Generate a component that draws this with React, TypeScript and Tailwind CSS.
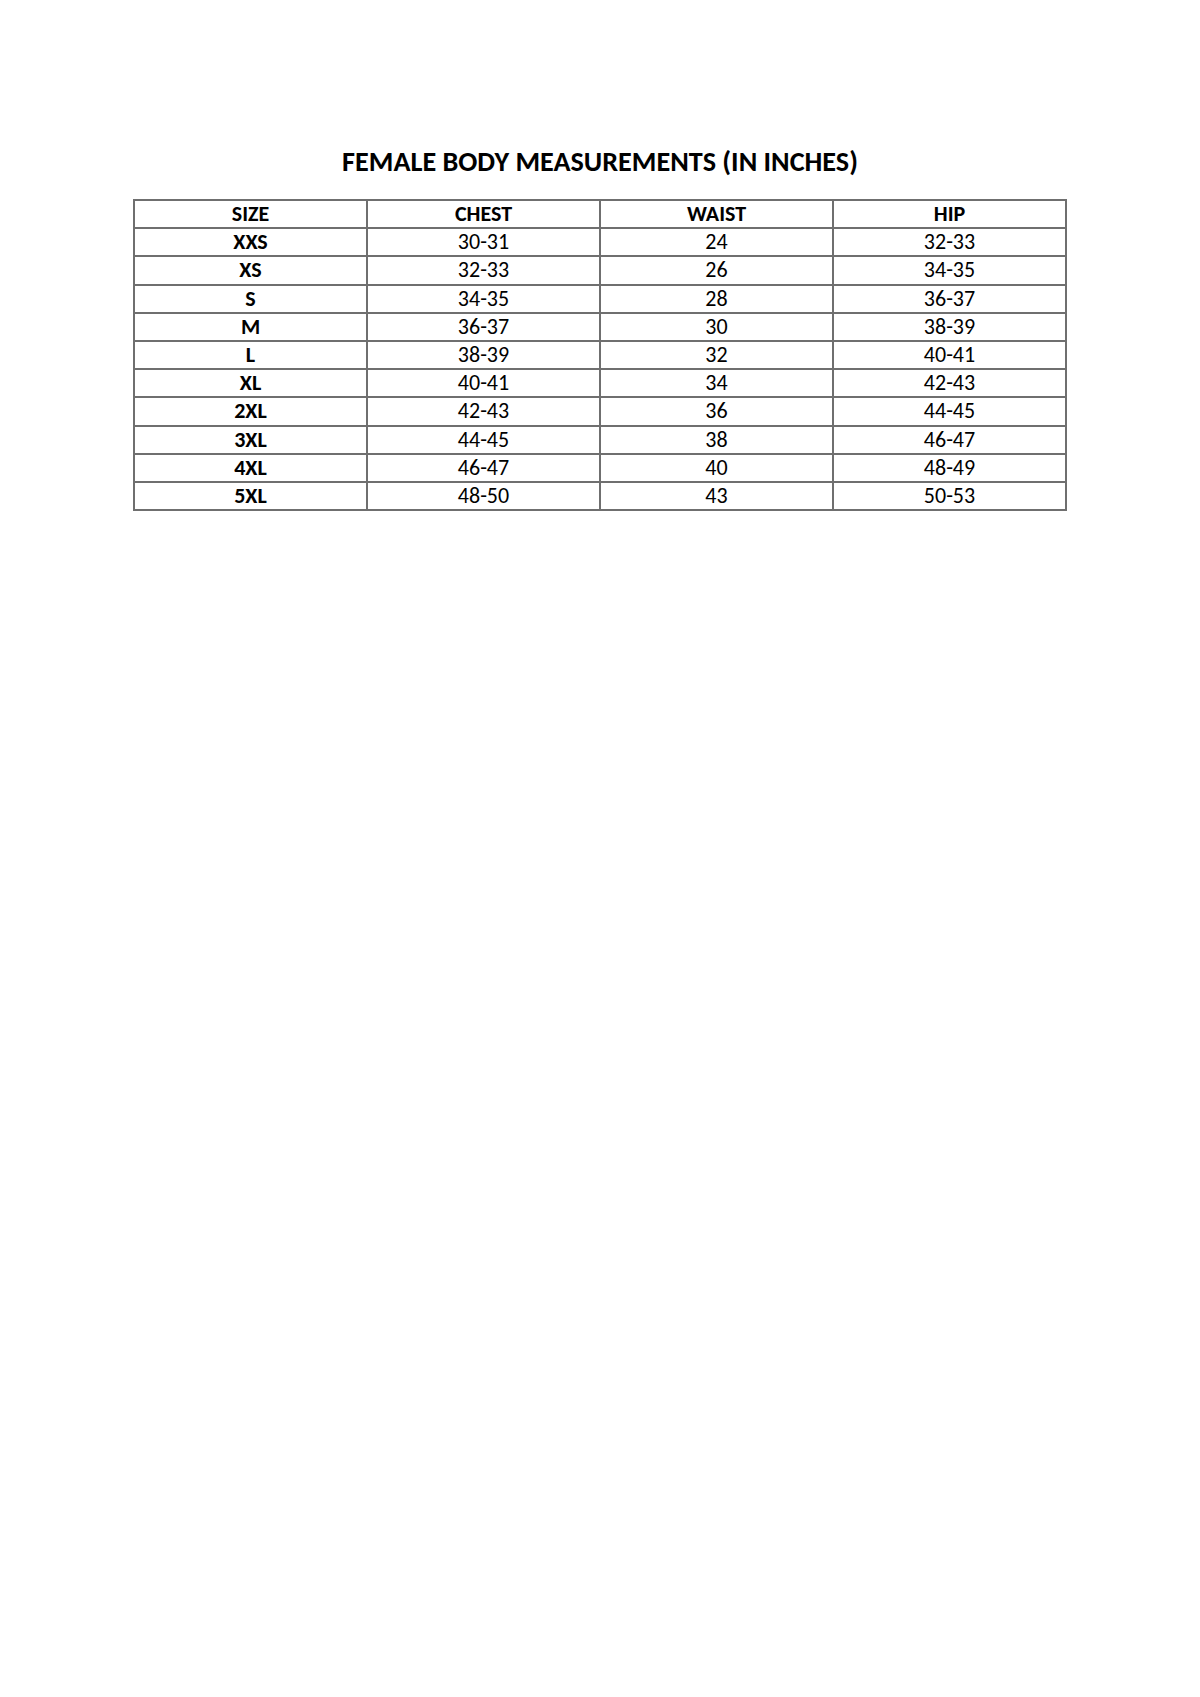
const rows = [
  ["XXS", "30-31", "24", "32-33"],
  ["XS", "32-33", "26", "34-35"],
  ["S", "34-35", "28", "36-37"],
  ["M", "36-37", "30", "38-39"],
  ["L", "38-39", "32", "40-41"],
  ["XL", "40-41", "34", "42-43"],
  ["2XL", "42-43", "36", "44-45"],
  ["3XL", "44-45", "38", "46-47"],
  ["4XL", "46-47", "40", "48-49"],
  ["5XL", "48-50", "43", "50-53"],
];

const headers = ["SIZE", "CHEST", "WAIST", "HIP"];

export default function App() {
  return (
    <div className="min-h-[1697px] w-full bg-white text-black font-['Carlito','Open_Sans',sans-serif] pt-[145px]">
      <h1 className="text-center text-[28.2px] leading-[34px] font-bold">
        FEMALE BODY MEASUREMENTS (IN INCHES)
      </h1>

      <table className="mx-auto mt-[20px] w-[934px] table-fixed border-collapse border-2 border-[#6f6f6f] text-[22px] leading-none">
        <thead>
          <tr className="h-[28.2px]">
            {headers.map((h) => (
              <th key={h} className="border-2 border-[#6f6f6f] p-0 font-bold text-center">
                {h}
              </th>
            ))}
          </tr>
        </thead>
        <tbody>
          {rows.map((r) => (
            <tr key={r[0]} className="h-[28.2px]">
              {r.map((c, i) => (
                <td
                  key={i}
                  className={
                    i === 0
                      ? "border-2 border-[#6f6f6f] p-0 text-center font-bold"
                      : "border-2 border-[#6f6f6f] p-0 text-center"
                  }
                >
                  {c}
                </td>
              ))}
            </tr>
          ))}
        </tbody>
      </table>
    </div>
  );
}
